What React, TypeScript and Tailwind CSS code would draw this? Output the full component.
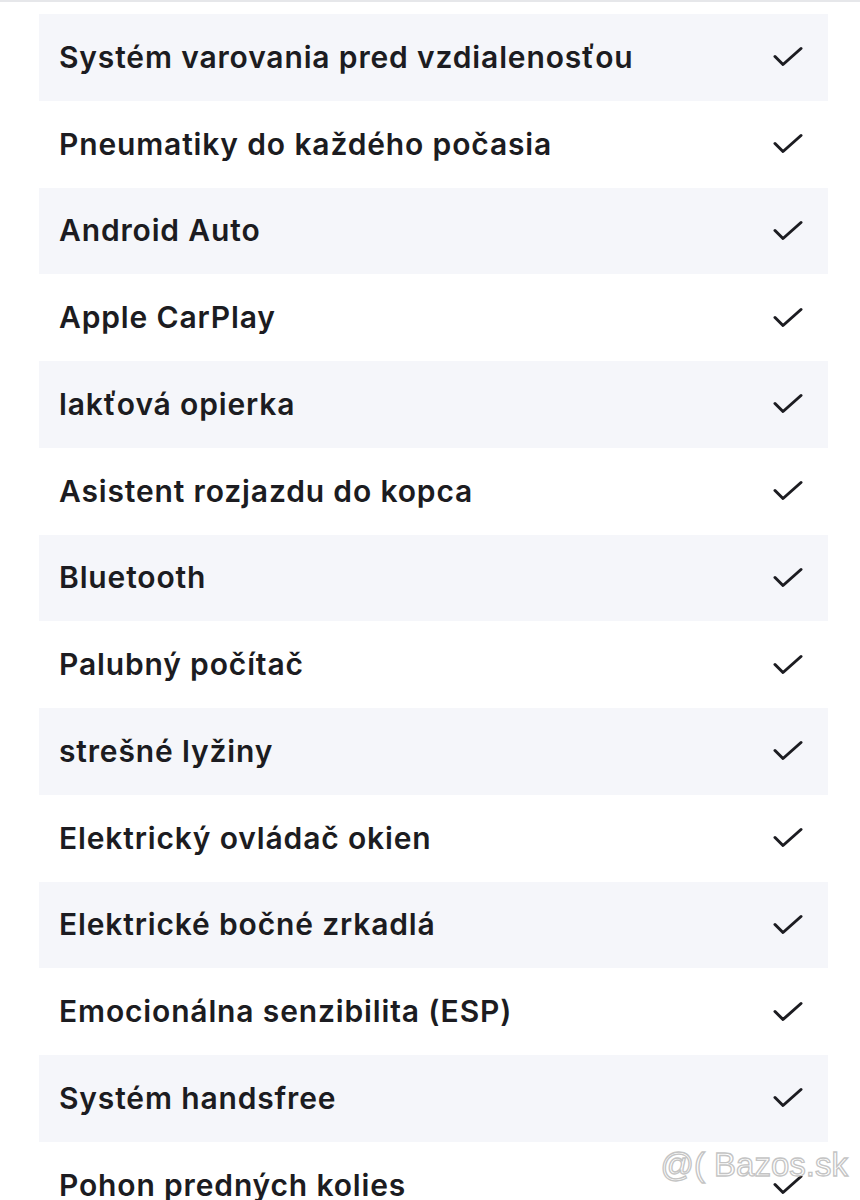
import React from "react";

const items = [
  "Systém varovania pred vzdialenosťou",
  "Pneumatiky do každého počasia",
  "Android Auto",
  "Apple CarPlay",
  "lakťová opierka",
  "Asistent rozjazdu do kopca",
  "Bluetooth",
  "Palubný počítač",
  "strešné lyžiny",
  "Elektrický ovládač okien",
  "Elektrické bočné zrkadlá",
  "Emocionálna senzibilita (ESP)",
  "Systém handsfree",
  "Pohon predných kolies",
];

function Check() {
  return (
    <svg width="30" height="22" viewBox="0 0 30 22" fill="none">
      <path d="M2 10.5 L10 18.5 L28 2.5" stroke="#1c1c21" strokeWidth="3" strokeLinecap="round" strokeLinejoin="round" />
    </svg>
  );
}

export default function App() {
  return (
    <div className="relative w-[860px] h-[1200px] overflow-hidden bg-white" style={{ fontFamily: "Inter, 'Noto Sans', sans-serif" }}>
      <div className="h-[2px] bg-[#e6e7ea]" />
      <div className="px-[39px] pt-[12px] w-[867px]">
        {items.map((t, i) => (
          <div
            key={t}
            className={`flex items-center justify-between h-[86.75px] pl-[20px] pr-[25px] ${i % 2 === 0 ? "bg-[#f5f6fa]" : "bg-white"}`}
          >
            <span className="text-[30px] font-semibold text-[#1c1c21] tracking-[0.85px] whitespace-nowrap">{t}</span>
            <Check />
          </div>
        ))}
      </div>
      <div
        className="absolute right-[12px] top-[1148px] text-[33px] leading-none text-transparent [-webkit-text-stroke:1.3px_#c4c4c4]"
        style={{ fontFamily: "'Liberation Sans', Arial, sans-serif" }}
      >
        @( Bazos.sk
      </div>
    </div>
  );
}
